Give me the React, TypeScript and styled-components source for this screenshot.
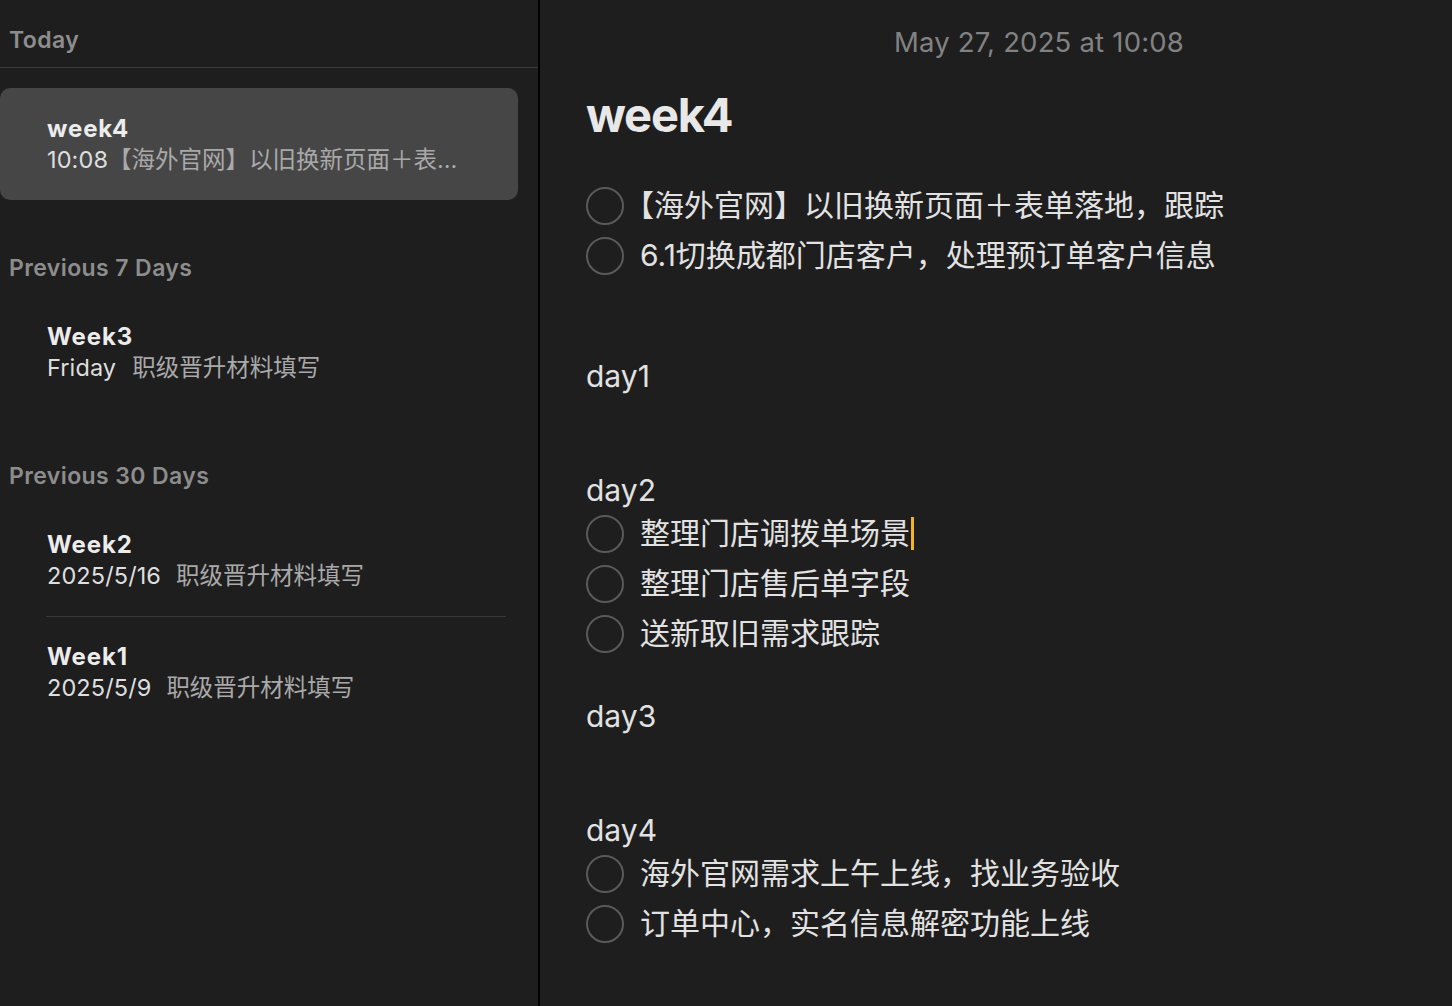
import React from "react";
import styled, { createGlobalStyle } from "styled-components";

const Global = createGlobalStyle`
  html, body { margin: 0; padding: 0; background: #1e1e1e; }
  body { font-family: Inter, "Noto Sans CJK SC", sans-serif; overflow: hidden; }
  * { box-sizing: border-box; }
`;

const Shell = styled.div`
  display: flex;
  width: 1452px;
  height: 1006px;
  background: #1e1e1e;
`;

const Sidebar = styled.aside`
  width: 540px;
  flex: none;
  border-right: 2px solid #000;
  display: flex;
  flex-direction: column;
`;

const SectionHeader = styled.div<{ $top: number }>`
  margin-top: ${(p) => p.$top}px;
  padding-left: 9px;
  height: 40px;
  line-height: 40px;
  font-size: 23px;
  font-weight: 600;
  color: #8d8d8d;
  letter-spacing: 0.4px;
`;

const HeaderRule = styled.div`
  margin-top: 7px;
  height: 1px;
  background: #3a3a3a;
`;

const NoteItem = styled.div<{ $selected?: boolean; $top: number }>`
  margin-top: ${(p) => p.$top}px;
  width: 518px;
  height: 112px;
  padding: 26px 0 0 47px;
  border-radius: 10px;
  background: ${(p) => (p.$selected ? "#464646" : "transparent")};
  display: flex;
  flex-direction: column;
`;

const NoteTitle = styled.div`
  height: 30px;
  line-height: 30px;
  font-size: 24px;
  font-weight: 700;
  letter-spacing: 0.9px;
  color: #ececec;
`;

const NoteSub = styled.div`
  margin-top: 1px;
  height: 30px;
  line-height: 30px;
  font-size: 23.5px;
  white-space: nowrap;
  display: flex;
`;

const NoteTime = styled.span`
  color: #dedede;
  letter-spacing: 0.1px;
`;

const NotePreview = styled.span<{ $gap: number }>`
  margin-left: ${(p) => p.$gap}px;
  color: #a9a9a9;
`;

const ItemDivider = styled.div`
  margin-left: 46px;
  width: 460px;
  height: 1px;
  background: #393939;
`;

const Main = styled.main`
  flex: 1;
  padding-left: 46px;
  display: flex;
  flex-direction: column;
  color: #e2e2e2;
`;

const DateHeader = styled.div`
  padding: 24px 0 0 40px;
  height: 60px;
  line-height: 36px;
  text-align: center;
  font-size: 27.5px;
  color: #828282;
  letter-spacing: 0.2px;
`;

const Title = styled.h1`
  margin: 27px 0 0;
  height: 56px;
  line-height: 56px;
  font-size: 47px;
  font-weight: 700;
  letter-spacing: -1.2px;
  color: #e8e8e8;
`;

const Line = styled.div`
  height: 38px;
  line-height: 38px;
  font-size: 30px;
  white-space: nowrap;
`;

const Row = styled.div`
  height: 50px;
  display: flex;
  align-items: center;
  gap: 16px;
  font-size: 30px;
  white-space: nowrap;
`;

const Check = styled.span`
  width: 38px;
  height: 38px;
  flex: none;
  border-radius: 50%;
  border: 2.5px solid #5a5a5a;
`;

const TaskText = styled.span<{ $shift: number }>`
  margin-left: ${(p) => p.$shift}px;
  padding-bottom: 2px;
  line-height: 40px;
`;

const Caret = styled.span`
  display: inline-block;
  width: 3px;
  height: 33px;
  margin-left: 1px;
  background: #f1b32c;
  vertical-align: -6px;
`;

const Blank = () => <Line>&nbsp;</Line>;

const Task = ({ children, shift = 0 }: { children: React.ReactNode; shift?: number }) => (
  <Row>
    <Check />
    <TaskText $shift={shift}>{children}</TaskText>
  </Row>
);

export default function App() {
  return (
    <>
      <Global />
      <Shell>
        <Sidebar>
          <SectionHeader $top={20}>Today</SectionHeader>
          <HeaderRule />
          <NoteItem $selected $top={20}>
            <NoteTitle>week4</NoteTitle>
            <NoteSub>
              <NoteTime>10:08</NoteTime>
              <NotePreview $gap={0}>【海外官网】以旧换新页面＋表...</NotePreview>
            </NoteSub>
          </NoteItem>

          <SectionHeader $top={48}>Previous 7 Days</SectionHeader>
          <NoteItem $top={8}>
            <NoteTitle>Week3</NoteTitle>
            <NoteSub>
              <NoteTime>Friday</NoteTime>
              <NotePreview $gap={16}>职级晋升材料填写</NotePreview>
            </NoteSub>
          </NoteItem>

          <SectionHeader $top={48}>Previous 30 Days</SectionHeader>
          <NoteItem $top={8}>
            <NoteTitle>Week2</NoteTitle>
            <NoteSub>
              <NoteTime>2025/5/16</NoteTime>
              <NotePreview $gap={15}>职级晋升材料填写</NotePreview>
            </NoteSub>
          </NoteItem>
          <ItemDivider />
          <NoteItem $top={-1}>
            <NoteTitle>Week1</NoteTitle>
            <NoteSub>
              <NoteTime>2025/5/9</NoteTime>
              <NotePreview $gap={15}>职级晋升材料填写</NotePreview>
            </NoteSub>
          </NoteItem>
        </Sidebar>

        <Main>
          <DateHeader>May 27, 2025 at 10:08</DateHeader>
          <Title>week4</Title>
          <Blank />
          <Task shift={-16}>【海外官网】以旧换新页面＋表单落地，跟踪</Task>
          <Task>6.1切换成都门店客户，处理预订单客户信息</Task>
          <Blank />
          <Blank />
          <Line>day1</Line>
          <Blank />
          <Blank />
          <Line>day2</Line>
          <Task>
            整理门店调拨单场景
            <Caret />
          </Task>
          <Task>整理门店售后单字段</Task>
          <Task>送新取旧需求跟踪</Task>
          <Blank />
          <Line>day3</Line>
          <Blank />
          <Blank />
          <Line>day4</Line>
          <Task>海外官网需求上午上线，找业务验收</Task>
          <Task>订单中心，实名信息解密功能上线</Task>
        </Main>
      </Shell>
    </>
  );
}
